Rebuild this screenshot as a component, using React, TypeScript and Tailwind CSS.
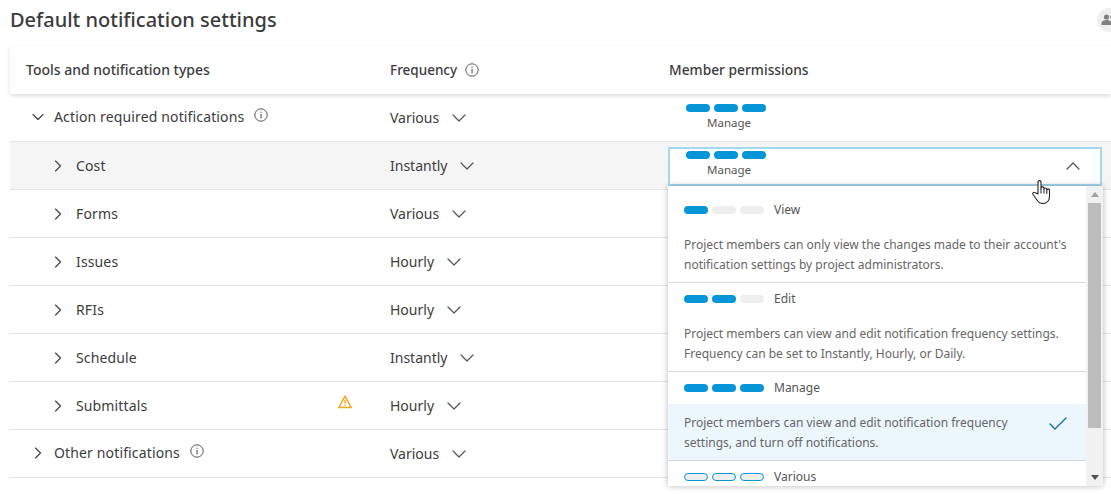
import { ChevronDown, ChevronRight, ChevronUp, Check } from "lucide-react";

const InfoIcon = () => (
  <svg width="14" height="14" viewBox="0 0 14 14" fill="none" className="shrink-0 text-[#555]">
    <circle cx="7" cy="7" r="6.2" stroke="currentColor" strokeWidth="1" />
    <rect x="6.5" y="6" width="1.1" height="4.4" fill="currentColor" />
    <rect x="6.5" y="3.600" width="1.1" height="1.3" fill="currentColor" />
  </svg>
);

const WarnIcon = () => (
  <svg width="14" height="14" viewBox="0 0 14 14" fill="none">
    <path d="M7 1.200 L13.200 12.600 H.8 Z" stroke="#f5a623" strokeWidth="1.500" strokeLinejoin="round" />
    <rect x="6.400" y="4.800" width="1.300" height="4" fill="#f5a623" />
    <rect x="6.400" y="9.500" width="1.300" height="1.400" fill="#f5a623" />
  </svg>
);

const HandCursor = () => (
  <svg width="18" height="24" viewBox="0 0 18 24" fill="none" className="absolute left-[1032px] top-[180px] z-20">
    <path
      d="M6 14V2c0-1.800 3-1.800 3 0v6c0-1.500 3-1.500 3 0v1c0-1.400 2.800-1.400 2.800 0v1c0-1.200 2.700-1.200 2.700 0v6c0 4.500-2.500 7.500-6.500 7.500-3 0-4.500-1-6-3.500L1 14.500c-1-1.500 1-3 2.300-1.800z"
      fill="#fff"
      stroke="#222"
      strokeWidth="1.100"
      strokeLinejoin="round"
    />
    <path d="M9 8v5.500M12 9v4.500M14.800 10v4" stroke="#222" strokeWidth="1" />
  </svg>
);

const Pills = ({ on, outline }: { on: number; outline?: boolean }) => (
  <div className="flex gap-1">
    {[0, 1, 2].map((i) => (
      <span
        key={i}
        className={
          outline
            ? "w-6 h-2 rounded-full bg-[#eeeeee] border border-[#0696d7]"
            : i < on
              ? "w-6 h-2 rounded-full bg-[#0696d7]"
              : "w-6 h-2 rounded-full bg-[#eeeeee]"
        }
      />
    ))}
  </div>
);

const Permission = () => (
  <div className="flex flex-col w-[96px] ml-[17px]">
    <Pills on={3} />
    <span className="text-[11.500px] leading-[16px] mt-[3px] pl-[21px] text-[#555]">Manage</span>
  </div>
);

const rows = [
  { name: "Action required notifications", freq: "Various", top: true, open: true, info: true },
  { name: "Cost", freq: "Instantly", active: true },
  { name: "Forms", freq: "Various" },
  { name: "Issues", freq: "Hourly" },
  { name: "RFIs", freq: "Hourly" },
  { name: "Schedule", freq: "Instantly" },
  { name: "Submittals", freq: "Hourly", warn: true },
  { name: "Other notifications", freq: "Various", top: true, info: true },
];

const options = [
  {
    label: "View",
    on: 1,
    text: ["Project members can only view the changes made to their account's", "notification settings by project administrators."],
    head: "h-[46px] pt-[2px]",
    body: "h-[50px] pt-[3px]",
  },
  {
    label: "Edit",
    on: 2,
    text: ["Project members can view and edit notification frequency settings.", "Frequency can be set to Instantly, Hourly, or Daily."],
    head: "h-[33px] pb-[1px]",
    body: "h-[55px] pt-[8px]",
  },
  {
    label: "Manage",
    on: 3,
    text: ["Project members can view and edit notification frequency", "settings, and turn off notifications."],
    head: "h-[32px]",
    body: "h-[56px] pt-[9px] bg-[#ebf7fd]",
    selected: true,
  },
];

export default function App() {
  return (
    <div
      className="relative w-[1111px] h-[494px] overflow-hidden bg-white text-[#3c3c3c] text-[14px]"
      style={{ fontFamily: '"Noto Sans", sans-serif' }}
    >
      <div className="flex items-center h-[46px] pl-[10px] pb-[6px]">
        <h1 className="text-[20px] font-medium text-[#3c3c3c]">Default notification settings</h1>
        <div className="ml-auto w-[24px] h-[24px] mr-[-10px] rounded-full bg-[#eeeeee] flex items-center justify-center">
          <svg width="16" height="12" viewBox="0 0 16 12" fill="#808080">
            <circle cx="5.500" cy="3" r="2.600" />
            <circle cx="11.500" cy="3" r="2.300" />
            <path d="M.5 11V9c0-2 2.500-3 5-3s5 1 5 3v2z" />
            <path d="M11.500 6c2 0 4 1 4 3v2h-3.500V9c0-1-.5-2-1.500-3z" />
          </svg>
        </div>
      </div>

      <div className="ml-[10px]">
        <div className="grid grid-cols-[380px_279px_1fr] items-center h-[48px] shadow-[0_2px_4px_rgba(0,0,0,0.14)] font-medium text-[#3c3c3c] text-[14px]">
          <span className="pl-4 pb-[1px]">Tools and notification types</span>
          <span className="flex items-center gap-[8px] text-[13.500px]">
            Frequency <InfoIcon />
          </span>
          <span className="text-[13.800px]">Member permissions</span>
        </div>

        {rows.map((r) => (
          <div
            key={r.name}
            className={
              r.active
                ? "grid grid-cols-[380px_279px_1fr] items-center h-[48px] border-b border-[#e5e5e5] bg-[#f5f5f5]"
                : "grid grid-cols-[380px_279px_1fr] items-center h-[48px] border-b border-[#e5e5e5]"
            }
          >
            <div className={r.top ? "flex items-center pl-[18px] pr-[38px] pb-[2px]" : "flex items-center pl-[38px] pr-[38px]"}>
              {r.open ? (
                <ChevronDown size={20} strokeWidth={1.400} className="shrink-0 text-[#444]" />
              ) : (
                <ChevronRight size={20} strokeWidth={1.400} className="shrink-0 text-[#444]" />
              )}
              <span className={r.top ? "ml-[6px] tracking-[0.01em]" : "ml-[8px] tracking-[0.01em]"}>{r.name}</span>
              {r.info && (
                <span className="ml-[10px] mb-[4px]">
                  <InfoIcon />
                </span>
              )}
              {r.warn && (
                <span className="ml-auto mb-[8px]">
                  <WarnIcon />
                </span>
              )}
            </div>
            <div className="flex items-center gap-[8px]">
              <span>{r.freq}</span>
              <ChevronDown size={24} strokeWidth={1.200} className="text-[#555]" />
            </div>
            {r.top && r.open ? (
              <Permission />
            ) : r.active ? (
              <div className="relative w-[434px] h-[39px] self-start mt-[5px] -ml-[1px] bg-white border-2 border-[#a3d9f0] pt-[2px]">
                <div className="-ml-[1px]">
                  <Permission />
                </div>
                <ChevronUp size={24} strokeWidth={1.200} className="absolute right-[15px] top-[5px] text-[#555]" />
              </div>
            ) : null}
          </div>
        ))}
      </div>

      <div className="absolute left-[668px] top-[186px] w-[435px] h-[300px] flex overflow-hidden bg-white rounded-b-[2px] shadow-[0_0_6px_rgba(0,0,0,0.28)]">
        <div className="w-[418px] shrink-0">
          {options.map((o) => (
            <div key={o.label} className="border-b border-[#d9d9d9]">
              <div className={`flex items-center gap-[10px] pl-4 ${o.head}`}>
                <Pills on={o.on} />
                <span className="text-[12px] text-[#555]">{o.label}</span>
              </div>
              <div className={`relative pl-4 text-[12px] leading-[20px] text-[#666] ${o.body}`}>
                {o.text.map((t) => (
                  <div key={t}>{t}</div>
                ))}
                {o.selected && (
                  <Check size={24} strokeWidth={1.300} className="absolute right-[16px] top-[8px] text-[#0a6fa8]" />
                )}
              </div>
            </div>
          ))}
          <div className="flex items-center gap-[10px] pl-4 h-[32px]">
            <Pills on={0} outline />
            <span className="text-[12px] text-[#555]">Various</span>
          </div>
        </div>
        <div className="w-[17px] bg-[#f1f1f1] flex flex-col items-center">
          <div className="h-[17px] flex items-center justify-center">
            <div className="w-0 h-0 border-x-[4px] border-x-transparent border-b-[5px] border-b-[#a0a0a0]" />
          </div>
          <div className="w-[13px] h-[225px] bg-[#bdbdbd]" />
          <div className="mt-auto h-[17px] flex items-center justify-center">
            <div className="w-0 h-0 border-x-[4px] border-x-transparent border-t-[5px] border-t-[#505050]" />
          </div>
        </div>
      </div>

      <HandCursor />
    </div>
  );
}
